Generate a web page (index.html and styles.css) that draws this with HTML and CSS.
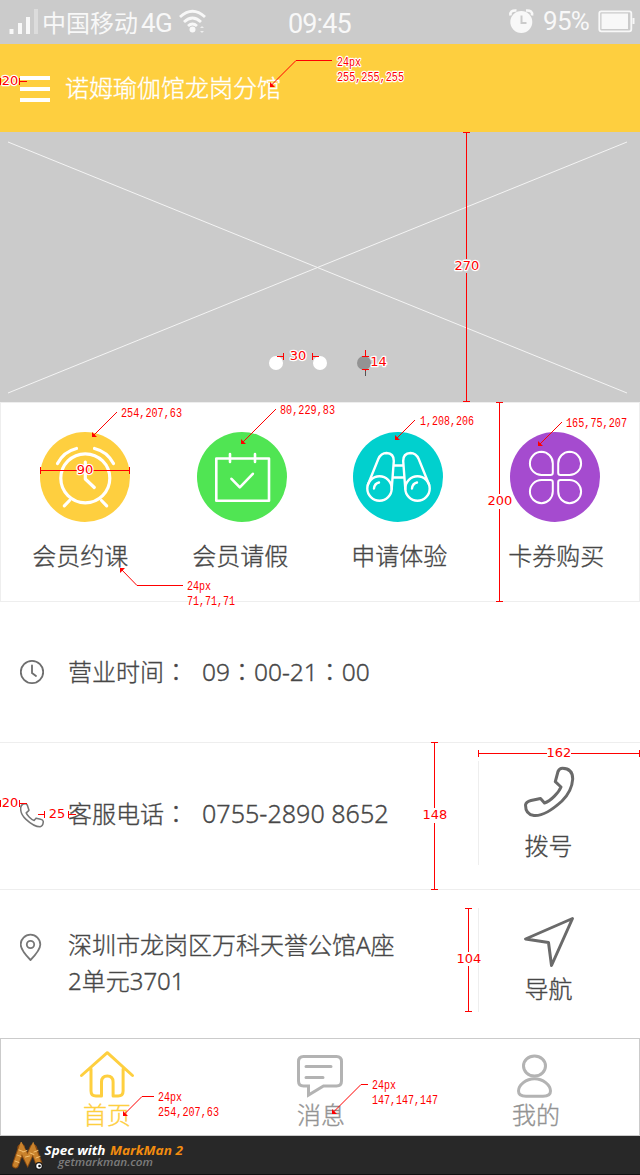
FILE: index.html
```html
<!DOCTYPE html>
<html lang="zh-CN">
<head>
<meta charset="utf-8">
<title>诺姆瑜伽馆龙岗分馆</title>
<link rel="stylesheet" href="styles.css">
</head>
<body>
<div class="page">
  <div class="status">
    <svg class="signal" width="32" height="44" viewBox="8 0 32 44"><path d="M9.500 29h4v5h-4zM18 23h4v11h-4zM26 17h4v17h-4z" fill="#f8f8f8"/><path d="M34 9h4v25h-4z" fill="#dcdcdc"/></svg>
    <span class="carrier">中国移动</span><span class="net">4G</span>
    <svg class="wifi" width="28" height="44" viewBox="179 0 28 44" fill="none" stroke="#f8f8f8" stroke-width="2.800"><path d="M180 17Q192.500 5.500 205 17M184 22Q192.500 14 201 22M188 26Q192.500 22 197 26"/><circle cx="192.500" cy="29.500" r="3" fill="#f8f8f8" stroke="none"/><path d="M200 28l2-2 2 2zM200 31l2 2 2-2z" fill="#eee" stroke="none"/></svg>
    <span class="time">09:45</span>
    <svg class="alarm" width="26" height="44" viewBox="507 0 26 44"><circle cx="520.300" cy="22" r="11" fill="#f8f8f8"/><path d="M509.500 15.500q-1-5.500 6-5M531 15.500q1-5.500-6-5" fill="none" stroke="#f8f8f8" stroke-width="2.600"/><path d="M520.500 15.500v7.500h5" fill="none" stroke="#cbcbcb" stroke-width="2"/></svg>
    <span class="percent">95%</span>
    <svg class="battery" width="38" height="44" viewBox="597 0 38 44"><rect x="598.300" y="11.300" width="32" height="20" rx="2" fill="none" stroke="#f8f8f8" stroke-width="1.800"/><path d="M600.500 13.500h26.500v15.500h-26.500zM631.500 18h2v6h-2z" fill="#f8f8f8"/></svg>
  </div>

  <header class="header">
    <div class="menu"><i></i><i></i><i></i></div>
    <h1 class="title">诺姆瑜伽馆龙岗分馆</h1>
  </header>

  <div class="banner">
    <svg class="cross" width="640" height="270" viewBox="0 132 640 270" stroke="#f4f4f4" stroke-width="1"><path d="M8 142L627 393M627 142L8 393"/></svg>
    <div class="dots"><i></i><i></i><i class="on"></i></div>
  </div>

  <nav class="grid">
    <div class="entry e1">
      <svg width="90" height="90" viewBox="40 432 90 90"><circle cx="85" cy="477" r="45" fill="#fecf3f"/><g class="w" stroke-width="3.200"><circle cx="85.300" cy="478.300" r="24.500"/><path d="M85.300 462v17l9 8.500M57.500 463.500Q64 451.500 76.500 448.500M94.500 448.500Q107 451.500 113.500 463.500M69.500 500.500l-5.200 5.300M101.500 500.500l5.200 5.300"/></g></svg>
      <span>会员约课</span>
    </div>
    <div class="entry e2">
      <svg width="90" height="90" viewBox="197 432 90 90"><circle cx="242" cy="477" r="45" fill="#50e553"/><g class="w" stroke-width="2.600"><path d="M216.300 458.500h52.700v42.200h-52.700zM230 454v8M255 454v8M231.500 478.800l8.300 8.500 13-13.500"/></g></svg>
      <span>会员请假</span>
    </div>
    <div class="entry e3">
      <svg width="90" height="90" viewBox="353 432 90 90"><circle cx="398" cy="477" r="45" fill="#01d0ce"/><g class="w" stroke-width="2.400"><circle cx="379.500" cy="488.500" r="12.200"/><circle cx="417.500" cy="488.500" r="12.200"/><path d="M367.800 485L378.300 459Q381 453 386.500 453Q394 453.500 393.800 461L391.700 489M429.200 485L418.700 459Q416 453 410.500 453Q403 453.500 403.200 461L405.300 489M394 465.500h9M393 477.500h11M374 488.500q.500-5 5-6M412 488.500q.500-5 5-6"/></g></svg>
      <span>申请体验</span>
    </div>
    <div class="entry e4">
      <svg width="90" height="90" viewBox="510 432 90 90"><circle cx="555" cy="477" r="45" fill="#a54bcf"/><g class="w" stroke-width="2"><path d="M541.500 451.800a11.600 11.600 0 0 0 0 23.200h9q2.300 0 2.300-2.300v-9.300a11.600 11.600 0 0 0-11.300-11.600zM569.500 451.800a11.600 11.600 0 0 1 0 23.200h-9q-2.300 0-2.300-2.300v-9.300a11.600 11.600 0 0 1 11.300-11.600zM541.500 503.200a11.600 11.600 0 0 1 0-23.200h9q2.300 0 2.300 2.300v9.300a11.600 11.600 0 0 1-11.300 11.600zM569.500 503.200a11.600 11.600 0 0 0 0-23.200h-9q-2.300 0-2.300 2.300v9.300a11.600 11.600 0 0 0 11.300 11.600z"/></g></svg>
      <span>卡券购买</span>
    </div>
  </nav>

  <section class="row hours">
    <svg class="lead" width="24" height="26" viewBox="20 659 24 26" fill="none" stroke="#6e6e6e" stroke-width="1.800" stroke-linecap="round"><circle cx="32" cy="672" r="11.200"/><path d="M32 665.500v7.500l4 3"/></svg>
    <p class="text">营业时间<b lang="zh-TW">：</b><em class="num">09<b lang="zh-TW">：</b>00-21<b lang="zh-TW">：</b>00</em></p>
  </section>

  <section class="row phone">
    <svg class="lead" width="24" height="26" viewBox="20 802 24 26"><path transform="translate(295.500 435.100) scale(-.48 .48)" d="M555.300 781.700L558.500 771.500Q560 768 563 768Q572.700 768 572.700 779Q572 791 562 800Q545 816 532 816Q525.500 814.500 525.500 805Q526 801.500 531 800.500L540.500 798L544.500 803C551 801 559 792 561 787Z" fill="none" stroke="#777" stroke-width="3.200" stroke-linejoin="round"/></svg>
    <p class="text">客服电话<b lang="zh-TW">：</b><em class="num tel">0755-2890 8652</em></p>
    <div class="action">
      <svg width="52" height="52" viewBox="523 766 52 52"><path d="M555.300 781.700L558 771.500Q559.500 768.300 562.500 768.300Q572.700 768.500 572.700 779Q572 791 562 801Q545 816.500 534 815.500Q525.500 814.500 525.500 805Q526 801.800 531 800.500L540.500 798.500L544.500 803C551 801 559 792 561 787Z" fill="none" stroke="#6a6a6a" stroke-width="3" stroke-linejoin="round"/></svg>
      <span>拨号</span>
    </div>
  </section>

  <section class="row place">
    <svg class="lead" width="24" height="28" viewBox="20 933 24 28" fill="none" stroke="#777" stroke-width="1.800"><path d="M30.500 960Q20.700 950 20.700 944.500a9.800 9.800 0 0 1 19.600 0Q40.300 950 30.500 960z"/><circle cx="30.500" cy="944.500" r="3.700"/></svg>
    <p class="text">深圳市龙岗区万科天誉公馆A座<br>2单元3701</p>
    <div class="action">
      <svg width="52" height="52" viewBox="523 916 52 52"><path d="M572.500 918.500L525.500 939L548.500 942.500L551.500 965.500Z" fill="none" stroke="#6a6a6a" stroke-width="3" stroke-linejoin="round"/></svg>
      <span>导航</span>
    </div>
  </section>

  <nav class="tabs">
    <div class="tab home">
      <svg width="56" height="50" viewBox="79 1049 56 50" fill="none" stroke="#fecf3f" stroke-width="3" stroke-linecap="round" stroke-linejoin="round"><path d="M81.500 1075.500L107.300 1052.700L132.500 1075.500M91 1069v22q0 5 5 5h5.500v-14q0-6 5.800-6t5.800 6v14h5q5 0 5-5v-22"/></svg>
      <span>首页</span>
    </div>
    <div class="tab news">
      <svg width="56" height="50" viewBox="293 1049 56 50" fill="none" stroke="#b3b3b3" stroke-width="3" stroke-linecap="round"><path d="M303.500 1056.500h33q5 0 5 5v19.500q0 5-5 5h-13l-15 9v-9h-5q-5 0-5-5v-19.500q0-5 5-5zM306 1066.500h25M306 1077.500h17"/></svg>
      <span>消息</span>
    </div>
    <div class="tab me">
      <svg width="56" height="50" viewBox="507 1049 56 50" fill="none" stroke="#b3b3b3" stroke-width="3"><ellipse cx="534.500" cy="1066" rx="11" ry="10"/><path d="M534.500 1078.800C543 1078.800 550.500 1085 550.500 1091Q550.500 1096.300 543 1096.300H526Q518.500 1096.300 518.500 1091C518.500 1085 526 1078.800 534.500 1078.800Z"/></svg>
      <span>我的</span>
    </div>
  </nav>

  <footer class="credit">
    <svg width="34" height="30" viewBox="10 1142 34 30" fill="none" stroke-linecap="round"><path d="M15.500 1165L21.500 1147.500M33.500 1148L39 1164" stroke="#8a4a10" stroke-width="7"/><path d="M21 1147.500L27.500 1160L33 1148" stroke="#8a4a10" stroke-width="7"/><path d="M15.500 1165L21.500 1147.500L27.500 1160L33 1148L39 1164" stroke="#c9822c" stroke-width="5"/><path d="M15 1161l4 1.500M17 1155l4 1.500M19 1150l4 1.500M23 1152l4-1.500M25.500 1157l4-1M30 1153l4 1.500M34 1152l4-1.500M36 1158l4-1.500" stroke="#f5c070" stroke-width="1"/><circle cx="39" cy="1166" r="4" fill="#1b1b1b"/><circle cx="39" cy="1166" r="2.700" fill="#fff"/><circle cx="39.500" cy="1166" r="1.300" fill="#111"/></svg>
    <svg width="150" height="38" viewBox="44 1136 150 38"><text class="b1" x="44.500" y="1154.500" textLength="61" lengthAdjust="spacingAndGlyphs" fill="#fff">Spec with</text><text class="b1" x="110" y="1154.500" textLength="73" lengthAdjust="spacingAndGlyphs" fill="#f28c0f">MarkMan 2</text><text class="b2" x="58" y="1166.300" textLength="95" lengthAdjust="spacingAndGlyphs" fill="#7c7c7c">getmarkman.com</text></svg>
  </footer>

  <svg class="marks" width="640" height="1175" viewBox="0 0 640 1175">
    <g fill="none" stroke="#f00" stroke-width="1">
      <path d="M271 85.500L296 60.500H332M93 436L117 412M242 443L276 409M396 439L415 420M539 445L562 422M121 569L137 585.500H183M124 1114.500L142 1096.500H154M333 1112.500L361 1084.500H368"/>
      <g shape-rendering="crispEdges">
        <path d="M.5 78v7M19.500 78v7M19 81.500h8M.5 800v7M19.500 800v7M19 803.500h8"/>
        <path d="M466.500 132v127M466.500 273v128M463 132.500h7M463 401.500h7"/>
        <path d="M277 356.500h7M283.500 353v7M312.500 353v7M312 356.500h7"/>
        <path d="M365.500 350v6M362 356.500h7M362 369.500h7M365.500 369v2"/><path d="M365.500 371v5" stroke="#555"/>
        <path d="M40 470.500h37M93 470.500h37M40.500 467v7M129.500 467v7"/>
        <path d="M499.500 402v92M499.500 509v93M496 402.500h7M496 601.500h7"/>
        <path d="M38 814.500h7M44.500 811v7M68.500 811v7M68 814.500h8"/>
        <path d="M434.500 742v66M434.500 823v66M431 742.500h7M431 889.500h7"/>
        <path d="M478 753.500h69M571 753.500h69M478.500 750v7M639.500 750v7"/>
        <path d="M468.500 908v44M468.500 966v46M465 908.500h7M465 1011.500h7"/>
      </g>
    </g>
    <path fill="#f00" d="M270 82v5h5zM92 432v5h5zM241 439v5h5zM395 435v5h5zM538 441v5h5zM120 573v-5h5zM123 1111v5h5zM332 1109v5h5z"/>
    <g class="dim">
      <text x="10" y="85">20</text><text x="467" y="270">270</text><text x="298" y="360">30</text><text x="378.500" y="366">14</text><text x="85" y="474">90</text><text x="500" y="505">200</text><text x="10" y="807">20</text><text x="57" y="818">25</text><text x="435" y="819">148</text><text x="559" y="757">162</text><text x="469" y="963">104</text>
    </g>
    <g class="note">
      <text x="337" y="65.500" textLength="24" lengthAdjust="spacingAndGlyphs">24px</text>
      <text x="337" y="80.500" textLength="67" lengthAdjust="spacingAndGlyphs">255,255,255</text>
      <text x="121" y="417" textLength="61" lengthAdjust="spacingAndGlyphs">254,207,63</text>
      <text x="280" y="414" textLength="55" lengthAdjust="spacingAndGlyphs">80,229,83</text>
      <text x="420" y="425" textLength="54" lengthAdjust="spacingAndGlyphs">1,208,206</text>
      <text x="566" y="427" textLength="61" lengthAdjust="spacingAndGlyphs">165,75,207</text>
      <text x="187" y="590" textLength="24" lengthAdjust="spacingAndGlyphs">24px</text>
      <text x="187" y="605" textLength="48" lengthAdjust="spacingAndGlyphs">71,71,71</text>
      <text x="158" y="1101" textLength="24" lengthAdjust="spacingAndGlyphs">24px</text>
      <text x="158" y="1116" textLength="61" lengthAdjust="spacingAndGlyphs">254,207,63</text>
      <text x="372" y="1089" textLength="24" lengthAdjust="spacingAndGlyphs">24px</text>
      <text x="372" y="1104" textLength="66" lengthAdjust="spacingAndGlyphs">147,147,147</text>
    </g>
  </svg>
</div>
</body>
</html>
```
FILE: styles.css
```css
* { box-sizing: border-box; }
body {
  margin: 0;
  background: #fff;
  color: #474747;
  font: 300 24px/36px "Noto Sans CJK SC", sans-serif;
}
.page { position: relative; width: 640px; height: 1175px; overflow: hidden; }
svg { display: block; flex: none; }
i, em { font-style: normal; }
p, h1 { margin: 0; }
.w { fill: none; stroke: #fff; stroke-linecap: round; stroke-linejoin: round; }

.status { display: flex; height: 44px; padding-left: 8px; background: #cbcbcb; color: #f8f8f8; line-height: 43px; white-space: nowrap; }
.carrier { width: 99px; padding-left: 2px; font-weight: 400; }
.net { width: 38px; padding-left: 2px; font: 400 26px/46px Roboto, sans-serif; letter-spacing: -.5px; }
.wifi { margin-left: 2px; }
.time { width: 66px; margin-left: 81px; font: 400 27px/48px Roboto, sans-serif; letter-spacing: -.9px; }
.alarm { margin-left: 154px; }
.percent { width: 54px; padding-left: 9px; font: 400 26px/43px Roboto, sans-serif; letter-spacing: -.7px; }
.battery { margin-left: 10px; }

.header { display: flex; align-items: center; height: 88px; padding-left: 20px; background: #fecf3f; color: #fff; }
.menu { display: flex; flex-direction: column; gap: 7px; width: 30px; padding-top: 1px; }
.menu i { height: 4px; background: #fff; }
.title { padding: 0 0 2px 15px; font-size: 24px; font-weight: 300; line-height: 36px; }
.title, .entry span, .action span, .tab span, .text { -webkit-text-stroke: .35px currentColor; }

.banner { display: grid; height: 270px; background: #cbcbcb; }
.cross, .dots { grid-area: 1 / 1; }
.dots { display: flex; gap: 30px; align-self: end; padding: 0 0 32px 269px; }
.dots i { width: 14px; height: 14px; border-radius: 50%; background: #fff; }
.dots .on { background: #939393; }

.grid { display: flex; height: 200px; padding: 29px 0 0 6px; border: 1px solid #eee; }
.entry { display: flex; flex: none; flex-direction: column; align-items: center; width: 156.500px; }
.entry span { margin-top: 15px; white-space: nowrap; }
.e1 span { margin-left: -10px; }
.e2 span { margin-left: -3px; }
.e3 span { margin-left: 2px; }
.e4 span { margin-left: 3px; }

.row { display: flex; align-items: center; padding-left: 20px; }
.row .text { flex: 1; padding-left: 24px; }
.row b { font: 300 24px/1 "Noto Sans CJK TC", sans-serif; }
.hours { height: 140px; }
.phone { height: 147px; border-top: 1px solid #eee; }
.place { height: 149px; border-top: 1px solid #eee; }
.phone .lead { margin-bottom: 2px; }
.phone .text { padding-bottom: 6px; }
.place .lead { margin-bottom: 34px; }
.place .text { padding-bottom: 2px; }
.text { font-family: "Noto Sans", "Noto Sans CJK SC", sans-serif; font-weight: 300; }
.num { padding-left: 14px; font-size: 24.500px; }
.tel { font-size: 25.100px; }
.action { display: flex; flex: none; flex-direction: column; align-items: center; align-self: flex-start; width: 162px; height: 104px; margin-top: 18px; padding: 5px 22px 0 0; border-left: 1px solid #eee; }
.action span { margin-top: 9px; }
.place .action { padding-top: 8px; }
.place .action span { margin-top: 2px; }

.tabs { display: flex; height: 98px; padding: 10px 0 0 78px; border: 1px solid #cbcbcb; color: #939393; }
.tab { display: flex; flex: none; flex-direction: column; align-items: center; width: 56px; }
.tab span { margin-top: -3px; }
.news { margin-left: 158px; }
.me { margin-left: 158px; }
.me span { margin-left: 2px; }
.home { color: #fecf3f; }

.credit { display: flex; align-items: flex-start; height: 39px; padding-left: 10px; background: #282828; border-bottom: 1px solid #111; }
.credit > svg:first-child { margin-top: 6px; }
.b1 { font: italic 700 13px "Open Sans", sans-serif; }
.b2 { font: italic 600 11px "Open Sans", sans-serif; }

.marks { position: absolute; left: 0; top: 0; pointer-events: none; }
.dim { font: 400 13px "DejaVu Sans", sans-serif; text-anchor: middle; }
.note { font: 400 12.500px "Liberation Mono", monospace; }
.dim, .note { fill: #f00; stroke: #fff; stroke-width: 2.500px; stroke-linejoin: round; paint-order: stroke; }
```
